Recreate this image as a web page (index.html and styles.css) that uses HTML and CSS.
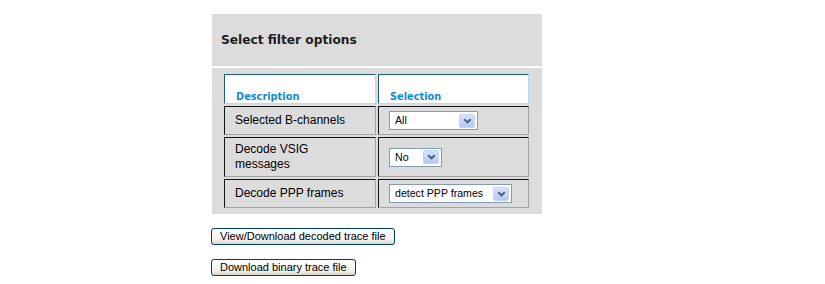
FILE: index.html
```html
<!DOCTYPE html>
<html lang="en">
<head>
    <meta charset="UTF-8">
    <title>Trace filter</title>
    <link rel="stylesheet" href="styles.css">
</head>
<body>

    <div class="panel">
        <div class="panel-title">Select filter options</div>
        <div class="panel-body">
            <table class="filters">
                <tr>
                    <th class="col-desc">Description</th>
                    <th class="col-sel">Selection</th>
                </tr>
                <tr>
                    <td>Selected B-channels</td>
                    <td>
                        <span class="select select-all">
                            <span class="select-text">All</span>
                            <span class="select-btn"><svg width="9" height="6" viewBox="0 0 9 6"><path d="M1.2 1.2 L4.5 4.3 L7.8 1.2" fill="none" stroke="#4d6185" stroke-width="2"/></svg></span>
                        </span>
                    </td>
                </tr>
                <tr>
                    <td>Decode VSIG messages</td>
                    <td>
                        <span class="select select-no">
                            <span class="select-text">No</span>
                            <span class="select-btn"><svg width="9" height="6" viewBox="0 0 9 6"><path d="M1.2 1.2 L4.5 4.3 L7.8 1.2" fill="none" stroke="#4d6185" stroke-width="2"/></svg></span>
                        </span>
                    </td>
                </tr>
                <tr>
                    <td>Decode PPP frames</td>
                    <td>
                        <span class="select select-ppp">
                            <span class="select-text">detect PPP frames</span>
                            <span class="select-btn"><svg width="9" height="6" viewBox="0 0 9 6"><path d="M1.2 1.2 L4.5 4.3 L7.8 1.2" fill="none" stroke="#4d6185" stroke-width="2"/></svg></span>
                        </span>
                    </td>
                </tr>
            </table>
        </div>
    </div>

    <div class="actions">
        <button class="xp-button">View/Download decoded trace file</button>
        <button class="xp-button">Download binary trace file</button>
    </div>

</body>
</html>
```

FILE: styles.css
```css
body {
    margin: 0;
    background-color: #ffffff;
    font-family: "Liberation Sans", Arial, sans-serif;
}
.panel {
    margin: 14px 0 0 212px;
    width: 330px;
    background-color: #dcdcdc;
}
.panel-title {
    height: 52px;
    line-height: 52px;
    padding-left: 9px;
    font-family: "DejaVu Sans", Verdana, sans-serif;
    font-weight: bold;
    font-size: 12.2px;
    color: #1e1e1e;
    border-bottom: 2px solid #ffffff;
}
.panel-body {
    padding: 4px 11px 4px 10px;
}
.filters {
    width: 309px;
    table-layout: fixed;
    border-collapse: separate;
    border-spacing: 2px;
}
.filters th,
.filters td {
    box-sizing: border-box;
    text-align: left;
}
.filters th {
    background-color: #ffffff;
    border-top: 1px solid #1d5b82;
    border-left: 1px solid #1d5b82;
    border-bottom: 1px solid #b3def6;
    border-right: 1px solid #b3def6;
    height: 30px;
    padding: 16px 10px 0 11px;
    vertical-align: bottom;
    font-family: "DejaVu Sans", Verdana, sans-serif;
    font-size: 9.8px;
    line-height: 12px;
    color: #128ad2;
}
.col-desc {
    width: 152px;
}
.col-sel {
    width: 151px;
}
.filters td {
    border-top: 1px solid #141414;
    border-left: 1px solid #141414;
    border-bottom: 1px solid #a3a3a3;
    border-right: 1px solid #a3a3a3;
    padding: 4px 12px 4px 10px;
    font-size: 12px;
    line-height: 15px;
    color: #000;
    vertical-align: middle;
}
.select {
    box-sizing: border-box;
    display: flex;
    align-items: center;
    justify-content: space-between;
    height: 19px;
    border: 1px solid #7f9db9;
    background-color: #ffffff;
    padding: 0 2px 0 5px;
}
.select-text {
    font-size: 10.6px;
    line-height: 15px;
}
.select-btn {
    box-sizing: border-box;
    display: flex;
    align-items: center;
    justify-content: center;
    width: 16px;
    height: 14px;
    border: 1px solid #c2d3fb;
    border-radius: 2px;
    background: linear-gradient(#d6e2fd, #b6c9f5);
}
.select-all {
    width: 89px;
}
.select-no {
    width: 53px;
}
.select-ppp {
    width: 123px;
}
.actions {
    margin: 14px 0 0 211px;
    display: flex;
    flex-direction: column;
    align-items: flex-start;
    gap: 14px;
}
.xp-button {
    height: 17px;
    padding: 0 8px;
    border: 1px solid #003c74;
    border-radius: 3px;
    background: linear-gradient(#ffffff, #f4f3ee 70%, #d8d4c8);
    font-family: "Liberation Sans", Arial, sans-serif;
    font-size: 11px;
    line-height: 15px;
    color: #000;
}
```
